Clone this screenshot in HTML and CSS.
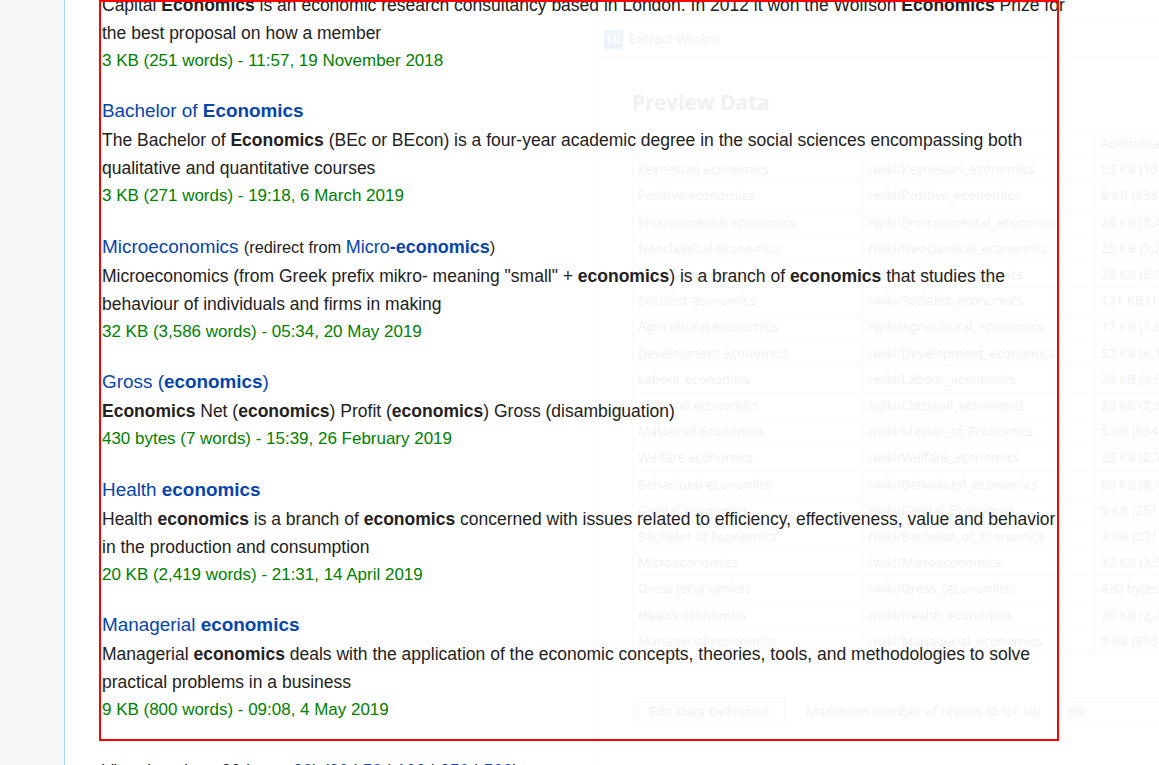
FILE: index.html
```html
<!DOCTYPE html>
<html lang="en">
<head>
<meta charset="utf-8">
<title>Search results - Wikipedia</title>
<link rel="stylesheet" href="styles.css">
</head>
<body>
<div class="page">
  <aside class="sidebar"></aside>
  <main class="content">
    <ul class="results">
      <li class="result">
        <div class="result-heading"><a href="#">Capital <span class="searchmatch">Economics</span></a></div>
        <div class="result-text">Capital <span class="searchmatch">Economics</span> is an economic research consultancy based in London. In 2012 it won the Wolfson <span class="searchmatch">Economics</span> Prize for the best proposal on how a member</div>
        <div class="result-data">3 KB (251 words) - 11:57, 19 November 2018</div>
      </li>
      <li class="result">
        <div class="result-heading"><a href="#">Bachelor of <span class="searchmatch">Economics</span></a></div>
        <div class="result-text">The Bachelor of <span class="searchmatch">Economics</span> (BEc or BEcon) is a four-year academic degree in the social sciences encompassing both qualitative and quantitative courses</div>
        <div class="result-data">3 KB (271 words) - 19:18, 6 March 2019</div>
      </li>
      <li class="result">
        <div class="result-heading"><a href="#">Microeconomics</a> <span class="alttitle">(redirect from <a href="#">Micro<span class="searchmatch">-economics</span></a>)</span></div>
        <div class="result-text">Microeconomics (from Greek prefix mikro- meaning "small" + <span class="searchmatch">economics</span>) is a branch of <span class="searchmatch">economics</span> that studies the behaviour of individuals and firms in making</div>
        <div class="result-data">32 KB (3,586 words) - 05:34, 20 May 2019</div>
      </li>
      <li class="result">
        <div class="result-heading"><a href="#">Gross (<span class="searchmatch">economics</span>)</a></div>
        <div class="result-text"><span class="searchmatch">Economics</span> Net (<span class="searchmatch">economics</span>) Profit (<span class="searchmatch">economics</span>) Gross (disambiguation)</div>
        <div class="result-data">430 bytes (7 words) - 15:39, 26 February 2019</div>
      </li>
      <li class="result">
        <div class="result-heading"><a href="#">Health <span class="searchmatch">economics</span></a></div>
        <div class="result-text">Health <span class="searchmatch">economics</span> is a branch of <span class="searchmatch">economics</span> concerned with issues related to efficiency, effectiveness, value and behavior in the production and consumption</div>
        <div class="result-data">20 KB (2,419 words) - 21:31, 14 April 2019</div>
      </li>
      <li class="result">
        <div class="result-heading"><a href="#">Managerial <span class="searchmatch">economics</span></a></div>
        <div class="result-text">Managerial <span class="searchmatch">economics</span> deals with the application of the economic concepts, theories, tools, and methodologies to solve practical problems in a business</div>
        <div class="result-data">9 KB (800 words) - 09:08, 4 May 2019</div>
      </li>
    </ul>
    <p class="view-more">View (previous 20 | <a href="#">next 20</a>) (<a href="#">20</a> | <a href="#">50</a> | <a href="#">100</a> | <a href="#">250</a> | <a href="#">500</a>)</p>
  </main>
</div>

<div class="wizard">
  <div class="wizard-header">
    <span class="wizard-logo">Ui</span>
    <span class="wizard-title">Extract Wizard</span>
  </div>
  <div class="wizard-body">
    <h2 class="wizard-heading">Preview Data</h2>
    <table class="preview">
      <colgroup><col class="c1"><col class="c2"><col class="c3"></colgroup>
      <tr><th>Title</th><th>Url</th><th>Additional info</th></tr>
      <tr><td>Keynesian economics</td><td>/wiki/Keynesian_economics</td><td>83 KB (10,262 words)</td></tr>
      <tr><td>Positive economics</td><td>/wiki/Positive_economics</td><td>8 KB (838 words)</td></tr>
      <tr><td>Environmental economics</td><td>/wiki/Environmental_economics</td><td>28 KB (3,419 words)</td></tr>
      <tr><td>Neoclassical economics</td><td>/wiki/Neoclassical_economics</td><td>25 KB (3,236 words)</td></tr>
      <tr><td>Marxian economics</td><td>/wiki/Marxian_economics</td><td>28 KB (2,937 words)</td></tr>
      <tr><td>Socialist economics</td><td>/wiki/Socialist_economics</td><td>131 KB (15,412 words)</td></tr>
      <tr><td>Agricultural economics</td><td>/wiki/Agricultural_economics</td><td>17 KB (1,873 words)</td></tr>
      <tr><td>Development economics</td><td>/wiki/Development_economics</td><td>52 KB (6,130 words)</td></tr>
      <tr><td>Labour economics</td><td>/wiki/Labour_economics</td><td>36 KB (4,521 words)</td></tr>
      <tr><td>Classical economics</td><td>/wiki/Classical_economics</td><td>20 KB (2,543 words)</td></tr>
      <tr><td>Master of Economics</td><td>/wiki/Master_of_Economics</td><td>5 KB (534 words)</td></tr>
      <tr><td>Welfare economics</td><td>/wiki/Welfare_economics</td><td>23 KB (2,712 words)</td></tr>
      <tr><td>Behavioral economics</td><td>/wiki/Behavioral_economics</td><td>80 KB (8,476 words)</td></tr>
      <tr><td>Capital Economics</td><td>/wiki/Capital_Economics</td><td>3 KB (251 words)</td></tr>
      <tr><td>Bachelor of Economics</td><td>/wiki/Bachelor_of_Economics</td><td>3 KB (271 words)</td></tr>
      <tr><td>Microeconomics</td><td>/wiki/Microeconomics</td><td>32 KB (3,586 words)</td></tr>
      <tr><td>Gross (economics)</td><td>/wiki/Gross_(economics)</td><td>430 bytes (7 words)</td></tr>
      <tr><td>Health economics</td><td>/wiki/Health_economics</td><td>20 KB (2,419 words)</td></tr>
      <tr><td>Managerial economics</td><td>/wiki/Managerial_economics</td><td>9 KB (800 words)</td></tr>
    </table>
    <div class="wizard-footer">
      <span class="wizard-button">Edit Data Definition</span>
      <span class="wizard-label">Maximum number of results (0 for all)</span>
      <span class="wizard-input">60</span>
    </div>
  </div>
</div>

<div class="highlight"></div>
</body>
</html>
```

FILE: styles.css
```css
html, body {
  margin: 0;
  padding: 0;
  background: #ffffff;
}

body {
  width: 1159px;
  height: 765px;
  overflow: hidden;
  position: relative;
  font-family: "Liberation Sans", Arial, sans-serif;
  color: #222222;
}

.page {
  display: flex;
  align-items: stretch;
  min-height: 765px;
}

.sidebar {
  flex: 0 0 64px;
  background: #f6f6f6;
  border-right: 1px solid #a7d7f9;
}

.content {
  position: relative;
  z-index: 1;
  width: 964px;
  padding-left: 37px;
  margin-top: -40.5px;
}

a {
  color: #0645ad;
  text-decoration: none;
}

.results {
  list-style: none;
  margin: 0;
  padding: 0;
}

.result {
  padding-bottom: 20.5px;
}

.result-heading {
  font-size: 18.9px;
  line-height: 31px;
  height: 31px;
}

.alttitle {
  font-size: 16.4px;
  line-height: 18px;
}

.alttitle a {
  font-size: 18px;
  line-height: 18px;
}

.result-text,
.result-data {
  font-size: 17.5px;
  line-height: 28px;
}

.result-data {
  color: #008000;
  font-size: 16.98px;
}

.searchmatch {
  font-weight: bold;
}

.view-more {
  margin: 12px 0 0;
  font-size: 17.5px;
  line-height: 28px;
}

/* red element highlight drawn over the results */
.highlight {
  position: absolute;
  z-index: 3;
  left: 99px;
  top: 0;
  width: 960px;
  height: 741px;
  box-sizing: border-box;
  border: 2px solid #ff0000;
  pointer-events: none;
}

/* faded Extract Wizard window behind the page text */
.wizard {
  position: absolute;
  z-index: 0;
  left: 595px;
  top: 20px;
  width: 640px;
  height: 760px;
  box-sizing: border-box;
  border: 1px solid #b0b0b0;
  opacity: 0.065;
  font-family: "Noto Sans", "Open Sans", sans-serif;
  color: #333333;
  pointer-events: none;
}

.wizard-header {
  display: flex;
  align-items: center;
  gap: 6px;
  height: 36px;
  padding-left: 8px;
  border-bottom: 1px solid #999999;
}

.wizard-logo {
  display: flex;
  align-items: center;
  justify-content: center;
  width: 19px;
  height: 19px;
  background: #0067df;
  color: #ffffff;
  font-size: 13px;
  font-weight: bold;
}

.wizard-title {
  font-size: 13.5px;
}

.wizard-body {
  padding-left: 36px;
}

.wizard-heading {
  margin: 30px 0 14px;
  font-size: 21px;
  line-height: 28px;
  font-weight: bold;
}

.preview {
  border-collapse: collapse;
  table-layout: fixed;
  width: 620px;
  font-size: 13px;
}

.preview .c1 { width: 230px; }
.preview .c2 { width: 233px; }
.preview .c3 { width: 157px; }

.preview th,
.preview td {
  border: 1px solid #aaaaaa;
  padding: 0 5px;
  line-height: 25.2px;
  text-align: left;
  font-weight: normal;
  white-space: nowrap;
  overflow: hidden;
}

.wizard-footer {
  display: flex;
  align-items: center;
  margin-top: 43px;
  margin-left: 2px;
  font-size: 13.2px;
}

.wizard-button {
  box-sizing: border-box;
  width: 151px;
  height: 26px;
  line-height: 24px;
  border: 1px solid #999999;
  text-align: center;
}

.wizard-label {
  margin-left: 21px;
}

.wizard-input {
  box-sizing: border-box;
  width: 100px;
  height: 26px;
  line-height: 24px;
  margin-left: 21px;
  padding-left: 6px;
  border: 1px solid #999999;
}
```
